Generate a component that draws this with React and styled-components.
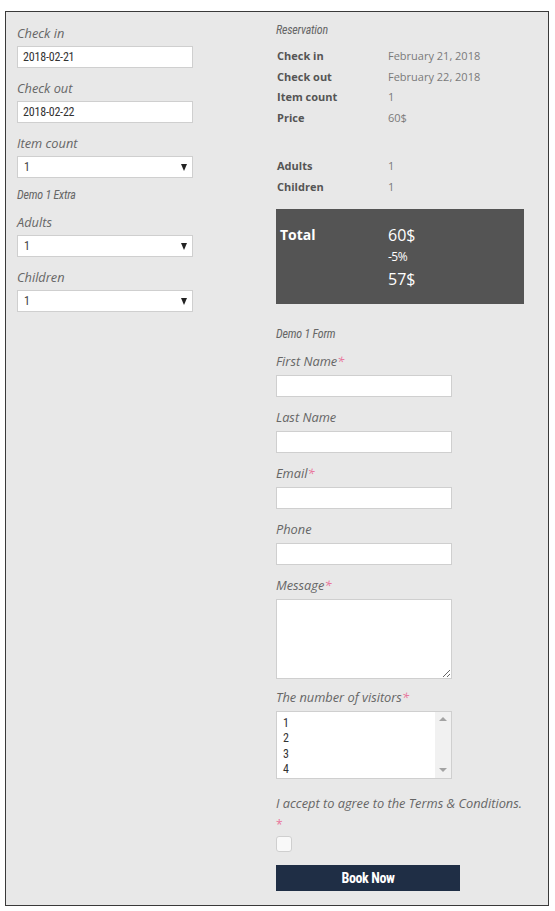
import React from "react";
import styled, { createGlobalStyle } from "styled-components";

const Global = createGlobalStyle`
  html, body { margin: 0; padding: 0; background: #fff; }
  body { font-family: "Open Sans", "Noto Sans", sans-serif; }
  * { box-sizing: border-box; }
`;

const COND = `"Roboto Condensed", "Liberation Sans Narrow", Roboto, sans-serif`;

const Page = styled.div`
  padding: 11px 0 0 5px;
  width: 555px;
  height: 911px;
`;

const Frame = styled.div`
  width: 544px;
  height: 895px;
  border: 1px solid #3a3a3a;
  background: #e8e8e8;
  padding: 9px 0 0 11px;
  display: grid;
  grid-template-columns: 259px 248px;
  align-items: start;
`;

const Column = styled.div`
  display: flex;
  flex-direction: column;
  padding-top: ${(p) => p.$top || 0}px;
`;

const Field = styled.div`
  display: flex;
  flex-direction: column;
  margin-bottom: ${(p) => (p.$gap ?? 11)}px;
`;

const Label = styled.label`
  font-family: "Open Sans", sans-serif;
  font-style: italic;
  font-size: 12.8px;
  line-height: 19px;
  color: #666;
  white-space: nowrap;
  margin-bottom: ${(p) => (p.$lg ? 4 : 3)}px;
`;

const Star = styled.span`
  color: #e8739a;
`;

const Heading = styled.div`
  font-family: ${COND};
  font-style: italic;
  font-size: 12px;
  line-height: 16px;
  color: #666;
  letter-spacing: -0.2px;
  margin: ${(p) => p.$m || "0"};
`;

const TextInput = styled.input`
  width: 176px;
  height: 22px;
  border: 1px solid #cfcfcf;
  background: #fff;
  padding: 0 5px;
  font-family: ${COND};
  font-size: 12px;
  letter-spacing: -0.2px;
  color: #333;
  outline: none;
`;

const TextArea = styled.textarea`
  width: 176px;
  height: 80px;
  border: 1px solid #cfcfcf;
  background: #fff;
  outline: none;
  display: block;
  resize: both;
`;

const SelectWrap = styled.div`
  position: relative;
  width: 176px;
  height: 22px;
`;

const NativeSelect = styled.select`
  appearance: none;
  -webkit-appearance: none;
  display: block;
  width: 100%;
  height: 22px;
  border: 1px solid #cfcfcf;
  border-radius: 0;
  background: #fff;
  padding: 0 6px;
  font-family: ${COND};
  font-size: 12px;
  color: #444;
  outline: none;
`;

const Arrow = styled.span`
  position: absolute;
  right: 6px;
  top: 8px;
  width: 0;
  height: 0;
  border-left: 3.5px solid transparent;
  border-right: 3.5px solid transparent;
  border-top: 7px solid #222;
  pointer-events: none;
`;

const ListBox = styled.div`
  width: 176px;
  height: 68px;
  border: 1px solid #cfcfcf;
  background: #fff;
  display: flex;
`;

const Options = styled.div`
  flex: 1;
  padding: 4px 0 0 6px;
  display: flex;
  flex-direction: column;
`;

const Option = styled.div`
  font-family: ${COND};
  font-size: 12px;
  line-height: 15.3px;
  color: #333;
`;

const Scroll = styled.div`
  width: 16px;
  background: #f1f1f1;
  display: flex;
  flex-direction: column;
  justify-content: space-between;
  align-items: center;
  padding: 5px 0 6px;
`;

const Tri = styled.span`
  width: 0;
  height: 0;
  border-left: 4px solid transparent;
  border-right: 4px solid transparent;
  ${(p) =>
    p.$down
      ? "border-top: 4px solid #a3a3a3;"
      : "border-bottom: 4px solid #a3a3a3;"}
`;

const SummaryTable = styled.div`
  display: grid;
  grid-template-columns: 112px 1fr;
  margin: ${(p) => p.$m || "0"};
`;

const Key = styled.div`
  font-family: "Open Sans", sans-serif;
  font-weight: 700;
  font-size: 11px;
  line-height: 20.5px;
  color: #555;
  padding-left: 1px;
`;

const Val = styled.div`
  font-family: "Open Sans", sans-serif;
  font-size: 11px;
  line-height: 20.5px;
  color: #7a7a7a;
`;

const TotalBox = styled.div`
  margin-top: 12px;
  width: 248px;
  height: 95px;
  background: #545454;
  padding: 15px 0 0 4px;
  display: grid;
  grid-template-columns: 108px 1fr;
  align-items: start;
`;

const TotalKey = styled.div`
  font-family: "Open Sans", sans-serif;
  font-weight: 700;
  font-size: 14px;
  line-height: 22px;
  color: #fff;
`;

const TotalVals = styled.div`
  display: flex;
  flex-direction: column;
`;

const TotalNum = styled.div`
  font-family: "Open Sans", sans-serif;
  font-size: ${(p) => (p.$small ? 12 : 16)}px;
  line-height: 22px;
  color: #fff;
  letter-spacing: ${(p) => (p.$small ? "-0.5px" : "0")};
`;

const Terms = styled.div`
  font-family: "Open Sans", sans-serif;
  font-style: italic;
  font-size: 12.8px;
  line-height: 19px;
  color: #666;
  margin-top: 15px;
  white-space: nowrap;
`;

const StarLine = styled.div`
  color: #e8739a;
  font-size: 12px;
  line-height: 19px;
  margin-top: 2px;
`;

const Check = styled.span`
  display: block;
  width: 16px;
  height: 16px;
  border: 1px solid #cfcfcf;
  border-radius: 3px;
  background: #f9f9f9;
  margin-top: 2px;
`;

const Button = styled.button`
  margin-top: 13px;
  width: 184px;
  height: 26px;
  border: none;
  background: #1f2e45;
  color: #fff;
  font-family: ${COND};
  font-weight: 700;
  font-size: 14px;
  letter-spacing: -0.4px;
  cursor: pointer;
`;

function Select({ value }) {
  return (
    <SelectWrap>
      <NativeSelect defaultValue={value}>
        <option>1</option>
        <option>2</option>
        <option>3</option>
      </NativeSelect>
      <Arrow />
    </SelectWrap>
  );
}

function Text({ label, required, value, gap, lg }) {
  return (
    <Field $gap={gap}>
      <Label $lg={lg}>
        {label}
        {required && <Star>*</Star>}
      </Label>
      <TextInput defaultValue={value || ""} />
    </Field>
  );
}

const rows1 = [
  ["Check in", "February 21, 2018"],
  ["Check out", "February 22, 2018"],
  ["Item count", "1"],
  ["Price", "60$"],
];
const rows2 = [
  ["Adults", "1"],
  ["Children", "1"],
];

export default function App() {
  return (
    <>
      <Global />
      <Page>
        <Frame>
          <Column $top={3}>
            <Text label="Check in" value="2018-02-21" />
            <Text label="Check out" value="2018-02-22" />
            <Field $gap={9}>
              <Label>Item count</Label>
              <Select value="1" />
            </Field>
            <Heading $m="0 0 10px">Demo 1 Extra</Heading>
            <Field>
              <Label>Adults</Label>
              <Select value="1" />
            </Field>
            <Field>
              <Label>Children</Label>
              <Select value="1" />
            </Field>
          </Column>

          <Column $top={1}>
            <Heading>Reservation</Heading>
            <SummaryTable $m="8px 0 0">
              {rows1.map(([k, v]) => (
                <React.Fragment key={k}>
                  <Key>{k}</Key>
                  <Val>{v}</Val>
                </React.Fragment>
              ))}
            </SummaryTable>
            <SummaryTable $m="28px 0 0">
              {rows2.map(([k, v]) => (
                <React.Fragment key={k}>
                  <Key>{k}</Key>
                  <Val>{v}</Val>
                </React.Fragment>
              ))}
            </SummaryTable>
            <TotalBox>
              <TotalKey>Total</TotalKey>
              <TotalVals>
                <TotalNum>60$</TotalNum>
                <TotalNum $small>-5%</TotalNum>
                <TotalNum>57$</TotalNum>
              </TotalVals>
            </TotalBox>

            <Heading $m="22px 0 10px">Demo 1 Form</Heading>
            <Text label="First Name" required lg />
            <Text label="Last Name" lg />
            <Text label="Email" required lg />
            <Text label="Phone" lg />
            <Field $gap={9}>
              <Label $lg>
                Message<Star>*</Star>
              </Label>
              <TextArea />
            </Field>
            <Field $gap={0}>
              <Label $lg>
                The number of visitors<Star>*</Star>
              </Label>
              <ListBox>
                <Options>
                  {["1", "2", "3", "4"].map((o) => (
                    <Option key={o}>{o}</Option>
                  ))}
                </Options>
                <Scroll>
                  <Tri />
                  <Tri $down />
                </Scroll>
              </ListBox>
            </Field>
            <Terms>I accept to agree to the Terms &amp; Conditions.</Terms>
            <StarLine>*</StarLine>
            <Check />
            <Button>Book Now</Button>
          </Column>
        </Frame>
      </Page>
    </>
  );
}
